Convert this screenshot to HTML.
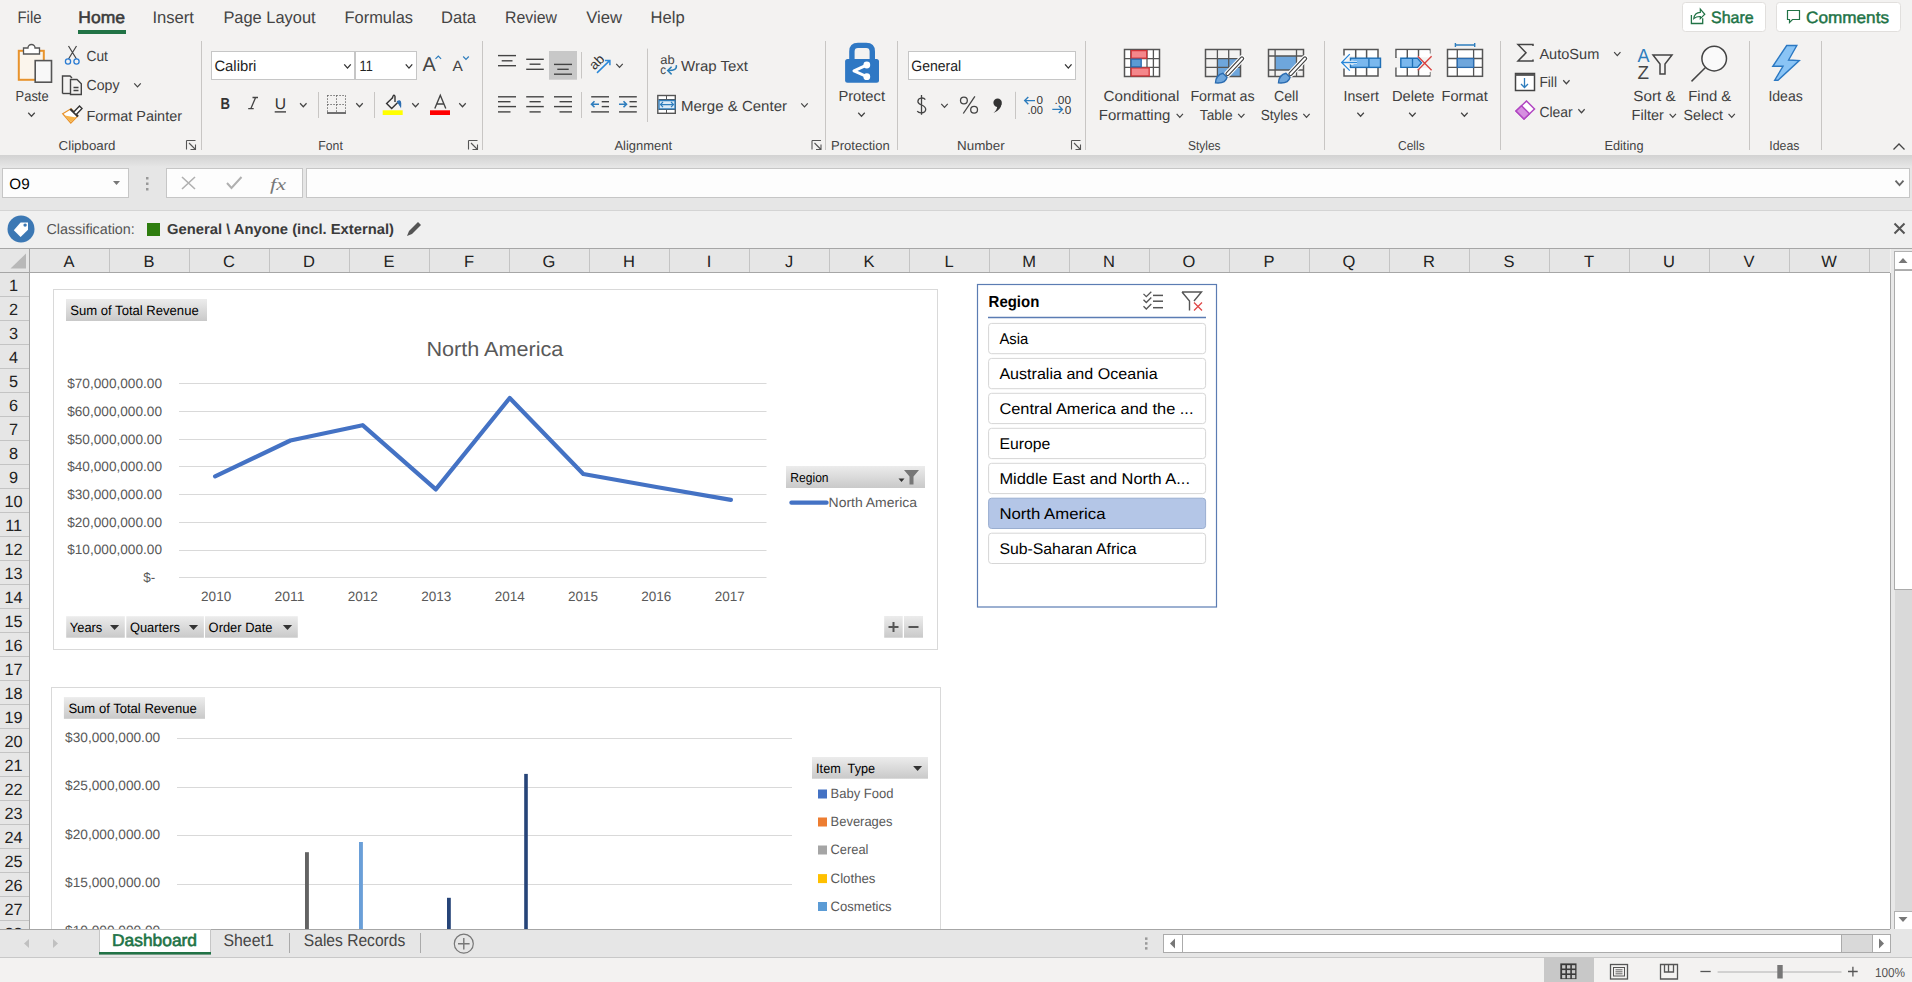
<!DOCTYPE html>
<html><head><meta charset="utf-8"><title>Excel - Dashboard</title>
<style>
html,body{margin:0;padding:0;width:1912px;height:982px;overflow:hidden;background:#f3f2f1;}
svg{position:absolute;left:0;top:0;display:block;}
text{white-space:pre;}
</style></head><body>
<svg width="1912" height="982" viewBox="0 0 1912 982" font-family="Liberation Sans, sans-serif" text-rendering="geometricPrecision">
<rect x="0" y="0" width="1912" height="155" fill="#f3f2f1" />
<defs><linearGradient id="shd" x1="0" y1="0" x2="0" y2="1"><stop offset="0" stop-color="#d2d2d2"/><stop offset="1" stop-color="#e6e6e6"/></linearGradient><linearGradient id="btn" x1="0" y1="0" x2="0" y2="1"><stop offset="0" stop-color="#ececec"/><stop offset="1" stop-color="#c9c9c9"/></linearGradient></defs>
<rect x="0" y="155" width="1912" height="55" fill="#e6e6e6" />
<rect x="0" y="155" width="1912" height="12" fill="url(#shd)" />
<rect x="0" y="210" width="1912" height="38" fill="#f0f0f0" />
<line x1="0" y1="210.5" x2="1912" y2="210.5" stroke="#d4d4d4" stroke-width="1" />
<text x="17.5" y="23" font-size="16.8" fill="#444" textLength="24.0" lengthAdjust="spacingAndGlyphs" font-family="Liberation Sans" >File</text>
<text x="78.3" y="23" font-size="16.8" fill="#3b3b3b" textLength="46.7" lengthAdjust="spacingAndGlyphs" font-family="Liberation Sans" stroke="#3b3b3b" stroke-width="0.55">Home</text>
<text x="152.4" y="23" font-size="16.8" fill="#444" textLength="41.6" lengthAdjust="spacingAndGlyphs" font-family="Liberation Sans" >Insert</text>
<text x="223.4" y="23" font-size="16.8" fill="#444" textLength="92.2" lengthAdjust="spacingAndGlyphs" font-family="Liberation Sans" >Page Layout</text>
<text x="344.5" y="23" font-size="16.8" fill="#444" textLength="68.5" lengthAdjust="spacingAndGlyphs" font-family="Liberation Sans" >Formulas</text>
<text x="441" y="23" font-size="16.8" fill="#444" textLength="35" lengthAdjust="spacingAndGlyphs" font-family="Liberation Sans" >Data</text>
<text x="505.1" y="23" font-size="16.8" fill="#444" textLength="51.9" lengthAdjust="spacingAndGlyphs" font-family="Liberation Sans" >Review</text>
<text x="586.2" y="23" font-size="16.8" fill="#444" textLength="35.8" lengthAdjust="spacingAndGlyphs" font-family="Liberation Sans" >View</text>
<text x="650.5" y="23" font-size="16.8" fill="#444" textLength="34.1" lengthAdjust="spacingAndGlyphs" font-family="Liberation Sans" >Help</text>
<rect x="78" y="30" width="48" height="4" fill="#217346" />
<rect x="1682.5" y="2.5" width="83" height="29" fill="#ffffff" stroke="#e1dfdd" stroke-width="1" rx="3" />
<rect x="1776.5" y="2.5" width="124" height="29" fill="#ffffff" stroke="#e1dfdd" stroke-width="1" rx="3" />
<text x="1711" y="23" font-size="16.5" fill="#217346" textLength="42.7" lengthAdjust="spacingAndGlyphs" font-family="Liberation Sans" stroke="#217346" stroke-width="0.45">Share</text>
<text x="1806" y="23" font-size="16.5" fill="#217346" textLength="83" lengthAdjust="spacingAndGlyphs" font-family="Liberation Sans" stroke="#217346" stroke-width="0.45">Comments</text>
<path d="M1691.4,15 V23.5 H1702.7 V18.3" fill="none" stroke="#217346" stroke-width="1.3" />
<path d="M1693.8,18.6 Q1694.5,12.5 1700.3,12.3 V9.1 L1704.8,14.3 L1700.3,18.6 V16.5 Q1696.5,16.3 1693.8,18.6 Z" fill="none" stroke="#217346" stroke-width="1.2" />
<path d="M1787.5,10.5 h12 v9 h-7 l-3,3 v-3 h-2 z" fill="none" stroke="#217346" stroke-width="1.2" />
<line x1="201.5" y1="41" x2="201.5" y2="150" stroke="#c8c6c4" stroke-width="1" />
<line x1="482.5" y1="41" x2="482.5" y2="150" stroke="#c8c6c4" stroke-width="1" />
<line x1="825.5" y1="41" x2="825.5" y2="150" stroke="#c8c6c4" stroke-width="1" />
<line x1="897.5" y1="41" x2="897.5" y2="150" stroke="#c8c6c4" stroke-width="1" />
<line x1="1085.5" y1="41" x2="1085.5" y2="150" stroke="#c8c6c4" stroke-width="1" />
<line x1="1324.5" y1="41" x2="1324.5" y2="150" stroke="#c8c6c4" stroke-width="1" />
<line x1="1500.5" y1="41" x2="1500.5" y2="150" stroke="#c8c6c4" stroke-width="1" />
<line x1="1749.5" y1="41" x2="1749.5" y2="150" stroke="#c8c6c4" stroke-width="1" />
<line x1="1821.5" y1="41" x2="1821.5" y2="150" stroke="#c8c6c4" stroke-width="1" />
<text x="58.6" y="149.7" font-size="13" fill="#444" textLength="56.9" lengthAdjust="spacingAndGlyphs" font-family="Liberation Sans" >Clipboard</text>
<text x="318.3" y="149.7" font-size="13" fill="#444" textLength="24.5" lengthAdjust="spacingAndGlyphs" font-family="Liberation Sans" >Font</text>
<text x="614.5" y="149.7" font-size="13" fill="#444" textLength="57.5" lengthAdjust="spacingAndGlyphs" font-family="Liberation Sans" >Alignment</text>
<text x="831" y="149.7" font-size="13" fill="#444" textLength="58.7" lengthAdjust="spacingAndGlyphs" font-family="Liberation Sans" >Protection</text>
<text x="957" y="149.7" font-size="13" fill="#444" textLength="47.7" lengthAdjust="spacingAndGlyphs" font-family="Liberation Sans" >Number</text>
<text x="1188" y="149.7" font-size="13" fill="#444" textLength="32.6" lengthAdjust="spacingAndGlyphs" font-family="Liberation Sans" >Styles</text>
<text x="1398" y="149.7" font-size="13" fill="#444" textLength="26.7" lengthAdjust="spacingAndGlyphs" font-family="Liberation Sans" >Cells</text>
<text x="1604.4" y="149.7" font-size="13" fill="#444" textLength="39.1" lengthAdjust="spacingAndGlyphs" font-family="Liberation Sans" >Editing</text>
<text x="1769.3" y="149.7" font-size="13" fill="#444" textLength="30.1" lengthAdjust="spacingAndGlyphs" font-family="Liberation Sans" >Ideas</text>
<path d="M186.5,140.5 h9 M186.5,140.5 v9 M189,143 l6.5,6.5 M195.5,144.5 v5 h-5" fill="none" stroke="#555" stroke-width="1.1" />
<path d="M468.5,140.5 h9 M468.5,140.5 v9 M471,143 l6.5,6.5 M477.5,144.5 v5 h-5" fill="none" stroke="#555" stroke-width="1.1" />
<path d="M812.0,140.5 h9 M812.0,140.5 v9 M814.5,143 l6.5,6.5 M821.0,144.5 v5 h-5" fill="none" stroke="#555" stroke-width="1.1" />
<path d="M1071.5,140.5 h9 M1071.5,140.5 v9 M1074,143 l6.5,6.5 M1080.5,144.5 v5 h-5" fill="none" stroke="#555" stroke-width="1.1" />
<path d="M1893.5,149.5 l5.5,-5.5 l5.5,5.5" fill="none" stroke="#444" stroke-width="1.3" />
<rect x="18.8" y="50.8" width="25" height="29" fill="#fbf5ec" stroke="#e8932c" stroke-width="2" />
<path d="M23.5,50 v-2 h4.5 a3,3 0 0 1 7,0 h4.5 v2 v4 h-16 z" fill="#fff" stroke="#555" stroke-width="1.3" />
<rect x="35.2" y="60.6" width="16.3" height="21.6" fill="#f8f8f8" stroke="#555" stroke-width="1.6" />
<text x="15.6" y="100.5" font-size="14.6" fill="#404040" textLength="33" lengthAdjust="spacingAndGlyphs" font-family="Liberation Sans" >Paste</text>
<path d="M28.25,112.75 L31.5,116.25 L34.75,112.75" fill="none" stroke="#444" stroke-width="1.2" />
<path d="M68.5,46 l8,13 M76.5,46 l-8,13" fill="none" stroke="#444" stroke-width="1.2" />
<circle cx="68" cy="61.5" r="2.6" fill="none" stroke="#2b7cd3" stroke-width="1.3"/>
<circle cx="76.5" cy="61.5" r="2.6" fill="none" stroke="#2b7cd3" stroke-width="1.3"/>
<text x="86.5" y="61" font-size="14.6" fill="#404040" textLength="21.4" lengthAdjust="spacingAndGlyphs" font-family="Liberation Sans" >Cut</text>
<path d="M62.5,93.5 v-17.5 h7.5 l2,2" fill="none" stroke="#444" stroke-width="1.4" />
<path d="M70.5,94.5 v-15 h6.5 l4.3,4.3 v10.7 z M73.5,87.5 h5 M73.5,90.5 h5" fill="none" stroke="#444" stroke-width="1.4" />
<path d="M62.5,93.5 h7.5" fill="none" stroke="#444" stroke-width="1.4" />
<text x="86.5" y="90.3" font-size="14.6" fill="#404040" textLength="33" lengthAdjust="spacingAndGlyphs" font-family="Liberation Sans" >Copy</text>
<path d="M134.25,83.45 L137.5,86.95 L140.75,83.45" fill="none" stroke="#444" stroke-width="1.2" />
<path d="M62.7,113.7 L71,108.8 L77.7,116 L70.8,123 Z" fill="#fff" stroke="#e8932c" stroke-width="1.3" />
<path d="M64.8,115.5 L76,117.5 L70.8,122 Z" fill="#f6b349" />
<line x1="70.3" y1="109" x2="78" y2="116.5" stroke="#333" stroke-width="2.2" />
<path d="M74,111.8 L79.5,106 L82,108.5 L76.5,114.3" fill="#fff" stroke="#333" stroke-width="1.4" />
<text x="86.5" y="120.6" font-size="14.6" fill="#404040" textLength="95.5" lengthAdjust="spacingAndGlyphs" font-family="Liberation Sans" >Format Painter</text>
<rect x="211.5" y="51.5" width="143" height="28" fill="#ffffff" stroke="#c6c6c6" stroke-width="1" />
<rect x="355.5" y="51.5" width="61" height="28" fill="#ffffff" stroke="#c6c6c6" stroke-width="1" />
<text x="214.4" y="71" font-size="15" fill="#222" textLength="42" lengthAdjust="spacingAndGlyphs" font-family="Liberation Sans" >Calibri</text>
<text x="359.6" y="71" font-size="15" fill="#222" textLength="13.2" lengthAdjust="spacingAndGlyphs" font-family="Liberation Sans" >11</text>
<path d="M344.25,64.3 L347.5,68.10000000000001 L350.75,64.3" fill="none" stroke="#333" stroke-width="1.3" />
<path d="M405.75,64.3 L409,68.10000000000001 L412.25,64.3" fill="none" stroke="#333" stroke-width="1.3" />
<text x="422.6" y="71" font-size="20" fill="#444" textLength="13.2" lengthAdjust="spacingAndGlyphs" font-family="Liberation Sans" >A</text>
<path d="M435.5,58.8 l2.8,-2.8 l2.8,2.8" fill="none" stroke="#2e7dbd" stroke-width="1.2" />
<text x="452.6" y="71" font-size="15" fill="#444" textLength="10.3" lengthAdjust="spacingAndGlyphs" font-family="Liberation Sans" >A</text>
<path d="M463.2,56.5 l2.8,2.8 l2.8,-2.8" fill="none" stroke="#2e7dbd" stroke-width="1.2" />
<text x="220.5" y="108.8" font-size="16" fill="#333" textLength="9.5" lengthAdjust="spacingAndGlyphs" font-weight="bold" font-family="Liberation Sans" >B</text>
<path d="M252.5,97.5 h5.5 M248.2,108.6 h5.5 M255.6,97.5 L250.9,108.6" fill="none" stroke="#444" stroke-width="1.3" />
<text x="274.7" y="108.8" font-size="15.5" fill="#333" textLength="11.3" lengthAdjust="spacingAndGlyphs" font-family="Liberation Sans" >U</text>
<line x1="274.7" y1="111.9" x2="286" y2="111.9" stroke="#333" stroke-width="1.3" />
<path d="M300.05,103.25 L303.3,106.75 L306.55,103.25" fill="none" stroke="#444" stroke-width="1.2" />
<line x1="318.5" y1="92" x2="318.5" y2="118" stroke="#c8c6c4" stroke-width="1" />
<line x1="374.5" y1="92" x2="374.5" y2="118" stroke="#c8c6c4" stroke-width="1" />
<path d="M327.5,95.5 h18 v17 M327.5,95.5 v17 M336.5,95.5 v17 M327.5,104.5 h18" fill="none" stroke="#444" stroke-width="1" stroke-dasharray="1.1 1.9"/>
<line x1="327" y1="113" x2="346" y2="113" stroke="#444" stroke-width="1.5" />
<path d="M356.25,103.25 L359.5,106.75 L362.75,103.25" fill="none" stroke="#444" stroke-width="1.2" />
<path d="M392.3,98 L386.6,103.4 L391.7,108.5 L397.7,102.5" fill="none" stroke="#333" stroke-width="1.4" />
<path d="M392.3,98.5 Q393.5,93 395,96.5 V102" fill="none" stroke="#333" stroke-width="1.4" />
<path d="M397.5,101.5 Q401.5,99 400.6,106.5 Q399,104 397.5,101.5 z" fill="#2b6cb0" stroke="#2b6cb0" stroke-width="1.2" />
<rect x="382.7" y="110.3" width="20" height="4.7" fill="#ffff00" />
<path d="M412.25,103.25 L415.5,106.75 L418.75,103.25" fill="none" stroke="#444" stroke-width="1.2" />
<path d="M434.8,108.4 L440.3,95.2 L445.8,108.4 M436.6,104 h7.4" fill="none" stroke="#444" stroke-width="1.4" />
<rect x="430" y="110.3" width="20" height="4.7" fill="#ff0000" />
<path d="M459.25,103.25 L462.5,106.75 L465.75,103.25" fill="none" stroke="#444" stroke-width="1.2" />
<line x1="498" y1="55.6" x2="516" y2="55.6" stroke="#444" stroke-width="1.4" />
<line x1="501.7" y1="60.8" x2="512.5" y2="60.8" stroke="#444" stroke-width="1.4" />
<line x1="498" y1="65.7" x2="516" y2="65.7" stroke="#444" stroke-width="1.4" />
<line x1="526.2" y1="59.3" x2="543.8000000000001" y2="59.3" stroke="#444" stroke-width="1.4" />
<line x1="529.6" y1="64.2" x2="540.5" y2="64.2" stroke="#444" stroke-width="1.4" />
<line x1="526.2" y1="69.3" x2="543.8000000000001" y2="69.3" stroke="#444" stroke-width="1.4" />
<rect x="549" y="51" width="28" height="28.7" fill="#c8c8c8" />
<line x1="554" y1="64.4" x2="572" y2="64.4" stroke="#444" stroke-width="1.4" />
<line x1="557.3" y1="69.3" x2="568.7" y2="69.3" stroke="#444" stroke-width="1.4" />
<line x1="554" y1="74.2" x2="572" y2="74.2" stroke="#444" stroke-width="1.4" />
<line x1="581.5" y1="52" x2="581.5" y2="78.5" stroke="#c8c6c4" stroke-width="1" />
<text x="596.8" y="66.6" font-size="13.5" fill="#333" text-anchor="middle" font-family="Liberation Sans" transform="rotate(-45 596.8 62.2)">ab</text>
<path d="M597,72.9 L609.6,60.6 M605,60.6 h4.9 v4.7" fill="none" stroke="#2b88d8" stroke-width="1.5" />
<path d="M616.25,63.849999999999994 L619.5,67.35 L622.75,63.849999999999994" fill="none" stroke="#444" stroke-width="1.2" />
<line x1="647.5" y1="48.6" x2="647.5" y2="122" stroke="#c8c6c4" stroke-width="1" />
<text x="660.2" y="64.4" font-size="12.5" fill="#444" textLength="14.4" lengthAdjust="spacingAndGlyphs" font-family="Liberation Sans" >ab</text>
<text x="660.2" y="73.6" font-size="12.5" fill="#444" textLength="5.8" lengthAdjust="spacingAndGlyphs" font-family="Liberation Sans" >c</text>
<path d="M676.3,65.2 Q677.5,70.8 668,70.6" fill="none" stroke="#2b7fb8" stroke-width="1.5" />
<path d="M671.6,66.8 L667.7,70.6 L671.6,74.4" fill="none" stroke="#2b7fb8" stroke-width="1.5" />
<text x="681" y="71" font-size="14.6" fill="#404040" textLength="67" lengthAdjust="spacingAndGlyphs" font-family="Liberation Sans" >Wrap Text</text>
<line x1="498" y1="96.8" x2="516" y2="96.8" stroke="#444" stroke-width="1.4" />
<line x1="498" y1="101.7" x2="510.5" y2="101.7" stroke="#444" stroke-width="1.4" />
<line x1="498" y1="106.6" x2="516" y2="106.6" stroke="#444" stroke-width="1.4" />
<line x1="498" y1="111.9" x2="510.5" y2="111.9" stroke="#444" stroke-width="1.4" />
<line x1="526.2" y1="96.8" x2="543.8000000000001" y2="96.8" stroke="#444" stroke-width="1.4" />
<line x1="529.5" y1="101.7" x2="540.7" y2="101.7" stroke="#444" stroke-width="1.4" />
<line x1="526.2" y1="106.6" x2="543.8000000000001" y2="106.6" stroke="#444" stroke-width="1.4" />
<line x1="529.5" y1="111.9" x2="540.7" y2="111.9" stroke="#444" stroke-width="1.4" />
<line x1="554" y1="96.8" x2="572" y2="96.8" stroke="#444" stroke-width="1.4" />
<line x1="559.5" y1="101.7" x2="572" y2="101.7" stroke="#444" stroke-width="1.4" />
<line x1="554" y1="106.6" x2="572" y2="106.6" stroke="#444" stroke-width="1.4" />
<line x1="559.5" y1="111.9" x2="572" y2="111.9" stroke="#444" stroke-width="1.4" />
<line x1="581.5" y1="92" x2="581.5" y2="118" stroke="#c8c6c4" stroke-width="1" />
<line x1="591.2" y1="96.8" x2="609.0" y2="96.8" stroke="#444" stroke-width="1.4" />
<line x1="601.7" y1="101.7" x2="609.0" y2="101.7" stroke="#444" stroke-width="1.4" />
<line x1="601.7" y1="106.6" x2="609.0" y2="106.6" stroke="#444" stroke-width="1.4" />
<line x1="591.2" y1="111.9" x2="609.0" y2="111.9" stroke="#444" stroke-width="1.4" />
<path d="M591.5,104.2 h7.5 M594.5,101.2 l-3,3 l3,3" fill="none" stroke="#2e7dbd" stroke-width="1.6" />
<line x1="619" y1="96.8" x2="636.8" y2="96.8" stroke="#444" stroke-width="1.4" />
<line x1="629.5" y1="101.7" x2="636.8" y2="101.7" stroke="#444" stroke-width="1.4" />
<line x1="629.5" y1="106.6" x2="636.8" y2="106.6" stroke="#444" stroke-width="1.4" />
<line x1="619" y1="111.9" x2="636.8" y2="111.9" stroke="#444" stroke-width="1.4" />
<path d="M619,104.2 h7.5 M623.5,101.2 l3,3 l-3,3" fill="none" stroke="#2e7dbd" stroke-width="1.6" />
<rect x="657.8" y="95.5" width="17.5" height="17.8" fill="#fff" stroke="#555" stroke-width="1.4" />
<path d="M658.5,99.5 h16.5 M658.5,109.5 h16.5 M666.5,95.5 v4 M666.5,109.5 v4" fill="none" stroke="#555" stroke-width="1" />
<path d="M659,100.5 h16 v8.3 h-16 z" fill="#ddebf7" stroke="#2e7dbd" stroke-width="1.3" />
<path d="M660.5,104.6 h13 M663,102 l-2.5,2.6 l2.5,2.6 M671,102 l2.5,2.6 l-2.5,2.6" fill="none" stroke="#2e7dbd" stroke-width="1.2" />
<text x="681" y="111" font-size="14.6" fill="#404040" textLength="106" lengthAdjust="spacingAndGlyphs" font-family="Liberation Sans" >Merge &amp; Center</text>
<path d="M801.25,103.45 L804.5,106.95 L807.75,103.45" fill="none" stroke="#444" stroke-width="1.2" />
<path d="M851.9,60 V51.5 Q851.9,45.4 858,45.4 H866.2 Q872.3,45.4 872.3,51.5 V60" fill="none" stroke="#2f78c4" stroke-width="5.4" />
<rect x="845.1" y="58.9" width="33.9" height="23.9" fill="#2f78c4" rx="2.5" />
<path d="M866.5,65.2 L854,70.8 L866.5,76.5" fill="none" stroke="#fff" stroke-width="3" stroke-linecap="round" stroke-linejoin="round"/>
<circle cx="866.8" cy="65" r="3.4" fill="#fff"/><circle cx="866.8" cy="76.7" r="3.4" fill="#fff"/>
<text x="838.4" y="101" font-size="14.6" fill="#404040" textLength="46.6" lengthAdjust="spacingAndGlyphs" font-family="Liberation Sans" >Protect</text>
<path d="M858.25,112.75 L861.5,116.25 L864.75,112.75" fill="none" stroke="#444" stroke-width="1.2" />
<rect x="908.5" y="51.5" width="167" height="28" fill="#ffffff" stroke="#c6c6c6" stroke-width="1" />
<text x="911.3" y="71" font-size="15" fill="#222" textLength="49.9" lengthAdjust="spacingAndGlyphs" font-family="Liberation Sans" >General</text>
<path d="M1065.05,64.3 L1068.3,68.10000000000001 L1071.55,64.3" fill="none" stroke="#333" stroke-width="1.3" />
<path d="M925.3,99.6 C923.8,97.3 917.9,97.2 917.9,101.4 C917.9,105.6 925.7,104.4 925.7,109.3 C925.7,113.6 919.2,113.6 917.2,111.2" fill="none" stroke="#444" stroke-width="1.3" />
<line x1="921.5" y1="95" x2="921.5" y2="114.8" stroke="#444" stroke-width="1.3" />
<path d="M941.25,103.85 L944.5,107.35 L947.75,103.85" fill="none" stroke="#444" stroke-width="1.2" />
<circle cx="963.9" cy="100.5" r="3.4" fill="none" stroke="#444" stroke-width="1.3"/><circle cx="974.1" cy="109.8" r="3.4" fill="none" stroke="#444" stroke-width="1.3"/>
<line x1="974.9" y1="96.3" x2="963.3" y2="113.5" stroke="#444" stroke-width="1.3" />
<circle cx="997.6" cy="102.7" r="4.2" fill="#333"/>
<path d="M993.5,113 Q1000.5,110.5 1001.8,103.5 L997.2,105.5 Q997.5,109.5 993.5,113 z" fill="#333" />
<line x1="1015.5" y1="91.8" x2="1015.5" y2="119" stroke="#c8c6c4" stroke-width="1" />
<text x="1036.5" y="103.5" font-size="11.5" fill="#333" textLength="6.5" lengthAdjust="spacingAndGlyphs" font-family="Liberation Sans" >0</text>
<text x="1027.5" y="113.7" font-size="11.5" fill="#333" textLength="15.5" lengthAdjust="spacingAndGlyphs" font-family="Liberation Sans" >.00</text>
<path d="M1024.5,100.6 h10.5 M1028.3,97 l-3.6,3.6 l3.6,3.6" fill="none" stroke="#2e7dbd" stroke-width="1.4" />
<text x="1054.5" y="103.5" font-size="11.5" fill="#333" textLength="16.5" lengthAdjust="spacingAndGlyphs" font-family="Liberation Sans" >.00</text>
<text x="1061.5" y="113.7" font-size="11.5" fill="#333" textLength="9.8" lengthAdjust="spacingAndGlyphs" font-family="Liberation Sans" >.0</text>
<path d="M1052.3,109.4 h10.5 M1058.8,105.8 l3.6,3.6 l-3.6,3.6" fill="none" stroke="#2e7dbd" stroke-width="1.4" />
<rect x="1124.5" y="49.5" width="35" height="27" fill="#fff" stroke="#555" stroke-width="1.5" />
<line x1="1130.8" y1="49.5" x2="1130.8" y2="76.5" stroke="#555" stroke-width="1.3" />
<line x1="1147" y1="49.5" x2="1147" y2="76.5" stroke="#555" stroke-width="1.3" />
<line x1="1153.4" y1="49.5" x2="1153.4" y2="76.5" stroke="#555" stroke-width="1.3" />
<line x1="1124.5" y1="58.6" x2="1159.5" y2="58.6" stroke="#555" stroke-width="1.3" />
<line x1="1124.5" y1="67.4" x2="1159.5" y2="67.4" stroke="#555" stroke-width="1.3" />
<rect x="1131.2" y="50.6" width="15.5" height="7.6" fill="#f4878b" stroke="#d13438" stroke-width="1.3" />
<rect x="1131.2" y="67.9" width="18" height="8" fill="#f4878b" stroke="#d13438" stroke-width="1.3" />
<rect x="1131.2" y="59.2" width="10" height="7.6" fill="#5b9bd5" stroke="#2b6cb0" stroke-width="1.3" />
<text x="1103.6" y="100.6" font-size="14.6" fill="#404040" textLength="75.8" lengthAdjust="spacingAndGlyphs" font-family="Liberation Sans" >Conditional</text>
<text x="1098.8" y="120.3" font-size="14.6" fill="#404040" textLength="71.5" lengthAdjust="spacingAndGlyphs" font-family="Liberation Sans" >Formatting</text>
<path d="M1176.6499999999999,113.85 L1179.8,117.35 L1182.95,113.85" fill="none" stroke="#444" stroke-width="1.2" />
<rect x="1217.4" y="58.6" width="23" height="17.8" fill="#6ea6dc" />
<rect x="1205.5" y="49.5" width="35" height="27" fill="none" stroke="#555" stroke-width="1.5" />
<line x1="1217.4" y1="49.5" x2="1217.4" y2="76.5" stroke="#555" stroke-width="1.3" />
<line x1="1228.7" y1="49.5" x2="1228.7" y2="76.5" stroke="#555" stroke-width="1.3" />
<line x1="1205.5" y1="58.6" x2="1240.5" y2="58.6" stroke="#555" stroke-width="1.3" />
<line x1="1205.5" y1="67.4" x2="1240.5" y2="67.4" stroke="#555" stroke-width="1.3" />
<path d="M1242.0,58.5 l-14.5,15.5" fill="none" stroke="#fff" stroke-width="6.5" stroke-linecap="round"/>
<path d="M1242.0,58.5 l-14.5,15.5" fill="none" stroke="#444" stroke-width="4.4" stroke-linecap="round"/>
<path d="M1242.0,58.5 l-14.5,15.5" fill="none" stroke="#fff" stroke-width="2" stroke-linecap="round"/>
<path d="M1215.5,82.8 q0.5,-8 7.5,-9.5 l4,4 q-1.5,6.5 -11.5,5.5 z" fill="#6ea6dc" stroke="#2b6cb0" stroke-width="1.4" />
<text x="1190.4" y="100.6" font-size="14.6" fill="#404040" textLength="64.3" lengthAdjust="spacingAndGlyphs" font-family="Liberation Sans" >Format as</text>
<text x="1199.8" y="120.3" font-size="14.6" fill="#404040" textLength="32.7" lengthAdjust="spacingAndGlyphs" font-family="Liberation Sans" >Table</text>
<path d="M1238.1499999999999,113.85 L1241.3,117.35 L1244.45,113.85" fill="none" stroke="#444" stroke-width="1.2" />
<rect x="1275.1" y="56" width="21.4" height="14" fill="#6ea6dc" />
<rect x="1268.5" y="49.5" width="35" height="27" fill="none" stroke="#555" stroke-width="1.5" />
<line x1="1275.1" y1="49.5" x2="1275.1" y2="76.5" stroke="#555" stroke-width="1.3" />
<line x1="1296.5" y1="49.5" x2="1296.5" y2="76.5" stroke="#555" stroke-width="1.3" />
<line x1="1268.5" y1="56" x2="1303.5" y2="56" stroke="#555" stroke-width="1.3" />
<line x1="1268.5" y1="70" x2="1303.5" y2="70" stroke="#555" stroke-width="1.3" />
<path d="M1305.0,58.5 l-14.5,15.5" fill="none" stroke="#fff" stroke-width="6.5" stroke-linecap="round"/>
<path d="M1305.0,58.5 l-14.5,15.5" fill="none" stroke="#444" stroke-width="4.4" stroke-linecap="round"/>
<path d="M1305.0,58.5 l-14.5,15.5" fill="none" stroke="#fff" stroke-width="2" stroke-linecap="round"/>
<path d="M1278.5,82.8 q0.5,-8 7.5,-9.5 l4,4 q-1.5,6.5 -11.5,5.5 z" fill="#6ea6dc" stroke="#2b6cb0" stroke-width="1.4" />
<text x="1273.9" y="100.6" font-size="14.6" fill="#404040" textLength="24.5" lengthAdjust="spacingAndGlyphs" font-family="Liberation Sans" >Cell</text>
<text x="1260.7" y="120.3" font-size="14.6" fill="#404040" textLength="37" lengthAdjust="spacingAndGlyphs" font-family="Liberation Sans" >Styles</text>
<path d="M1303.35,113.85 L1306.5,117.35 L1309.65,113.85" fill="none" stroke="#444" stroke-width="1.2" />
<path d="M1344,55.5 V49.5 H1378 V58 M1378,67.5 V76 H1344 V68.5 M1355.7,49.5 V58 M1366.6,49.5 V58 M1355.7,67.5 V76 M1366.6,67.5 V76" fill="#fff" stroke="#555" stroke-width="1.5" />
<rect x="1350.5" y="58.2" width="30" height="9.2" fill="#7ab8ee" stroke="#1f6fb5" stroke-width="1.4" />
<line x1="1368.9" y1="58.2" x2="1368.9" y2="67.4" stroke="#1f6fb5" stroke-width="1.3" />
<path d="M1352,60.5 V65" fill="none" stroke="#cfe6fa" stroke-width="3" />
<path d="M1349.8,54.1 L1341.6,62.5 L1349.8,70.6 M1341.6,62.5 H1357" fill="none" stroke="#fff" stroke-width="3" />
<path d="M1349.8,54.1 L1341.6,62.5 L1349.8,70.6 M1341.6,62.5 H1357" fill="none" stroke="#2b88d8" stroke-width="1.3" />
<text x="1343.6" y="100.9" font-size="14.6" fill="#404040" textLength="35.2" lengthAdjust="spacingAndGlyphs" font-family="Liberation Sans" >Insert</text>
<path d="M1357.35,112.75 L1360.6,116.25 L1363.85,112.75" fill="none" stroke="#444" stroke-width="1.2" />
<path d="M1396,58 V49.5 H1429.8 V53.5 M1429.8,72 V76 H1396 V67.5 M1407.3,49.5 V58 M1418.5,49.5 V56 M1407.3,67.5 V76 M1418.5,69 V76" fill="none" stroke="#555" stroke-width="1.5" />
<rect x="1396.8" y="50.3" width="33" height="7" fill="#fff" />
<rect x="1396.8" y="68.2" width="33" height="7" fill="#fff" />
<path d="M1407.3,49.5 V58 M1418.5,49.5 V56 M1407.3,67.5 V76 M1418.5,69 V76" fill="none" stroke="#555" stroke-width="1.4" />
<path d="M1400.8,58.2 H1417.5 L1421.5,62.8 L1417.5,67.4 H1400.8 Z" fill="#7ab8ee" stroke="#1f6fb5" stroke-width="1.4" />
<line x1="1412.5" y1="58.2" x2="1412.5" y2="67.4" stroke="#1f6fb5" stroke-width="1.3" />
<path d="M1417.8,56.2 L1431.6,70.3 M1431.6,56.2 L1417.8,70.3" fill="none" stroke="#d9413f" stroke-width="1.3" />
<text x="1392" y="100.9" font-size="14.6" fill="#404040" textLength="42.5" lengthAdjust="spacingAndGlyphs" font-family="Liberation Sans" >Delete</text>
<path d="M1409.15,112.75 L1412.4,116.25 L1415.65,112.75" fill="none" stroke="#444" stroke-width="1.2" />
<rect x="1447.5" y="49.5" width="35" height="26.8" fill="#fff" stroke="#555" stroke-width="1.5" />
<line x1="1457.3" y1="49.5" x2="1457.3" y2="76.3" stroke="#555" stroke-width="1.3" />
<line x1="1473.6" y1="49.5" x2="1473.6" y2="76.3" stroke="#555" stroke-width="1.3" />
<line x1="1447.5" y1="58.5" x2="1482.5" y2="58.5" stroke="#555" stroke-width="1.3" />
<line x1="1447.5" y1="67.4" x2="1482.5" y2="67.4" stroke="#555" stroke-width="1.3" />
<rect x="1457.3" y="58.5" width="16.3" height="8.9" fill="#6ea6dc" stroke="#2b6cb0" stroke-width="1.3" />
<path d="M1455.4,45 h19.3 M1455.4,43 v4 M1474.7,43 v4" fill="none" stroke="#2e7dbd" stroke-width="1.4" />
<text x="1441.5" y="100.9" font-size="14.6" fill="#404040" textLength="46.2" lengthAdjust="spacingAndGlyphs" font-family="Liberation Sans" >Format</text>
<path d="M1461.15,112.75 L1464.4,116.25 L1467.65,112.75" fill="none" stroke="#444" stroke-width="1.2" />
<path d="M1533,46 v-1.5 h-15 l8,8.3 l-8,8.3 h15 v-1.5" fill="none" stroke="#444" stroke-width="1.5" />
<text x="1539.4" y="58.8" font-size="14.6" fill="#404040" textLength="59.9" lengthAdjust="spacingAndGlyphs" font-family="Liberation Sans" >AutoSum</text>
<path d="M1614.1499999999999,52.05 L1617.3,55.55 L1620.45,52.05" fill="none" stroke="#444" stroke-width="1.2" />
<rect x="1515.5" y="73.5" width="19" height="17" fill="#fff" stroke="#444" stroke-width="1.5" />
<line x1="1515.5" y1="74.8" x2="1534.5" y2="74.8" stroke="#555" stroke-width="2.2" />
<path d="M1524.5,78 v9 M1521,84 l3.5,3.5 l3.5,-3.5" fill="none" stroke="#2e7dbd" stroke-width="1.3" />
<text x="1539.4" y="87.4" font-size="14.6" fill="#404040" textLength="17.6" lengthAdjust="spacingAndGlyphs" font-family="Liberation Sans" >Fill</text>
<path d="M1563.25,80.25 L1566.4,83.75 L1569.5500000000002,80.25" fill="none" stroke="#444" stroke-width="1.2" />
<path d="M1516,111 l10.5,-10 l8,8 l-10.5,10 z" fill="#fff" stroke="#b146c2" stroke-width="1.5" />
<path d="M1516,111 l5.5,-5.2 l8,8 l-5.5,5.2 z" fill="#d68fe0" stroke="#b146c2" stroke-width="1.5" />
<text x="1539.4" y="116.6" font-size="14.6" fill="#404040" textLength="33.3" lengthAdjust="spacingAndGlyphs" font-family="Liberation Sans" >Clear</text>
<path d="M1578.35,109.25 L1581.5,112.75 L1584.65,109.25" fill="none" stroke="#444" stroke-width="1.2" />
<text x="1637.6" y="61.5" font-size="19" fill="#2e7dbd" textLength="12" lengthAdjust="spacingAndGlyphs" font-family="Liberation Sans" >A</text>
<text x="1637.6" y="79" font-size="19" fill="#444" textLength="11.5" lengthAdjust="spacingAndGlyphs" font-family="Liberation Sans" >Z</text>
<path d="M1653,55 h19 l-7,9 v10 h-5 v-10 z" fill="none" stroke="#444" stroke-width="1.5" />
<text x="1633.3" y="100.7" font-size="14.6" fill="#404040" textLength="42.4" lengthAdjust="spacingAndGlyphs" font-family="Liberation Sans" >Sort &amp;</text>
<text x="1631.6" y="120.4" font-size="14.6" fill="#404040" textLength="32.3" lengthAdjust="spacingAndGlyphs" font-family="Liberation Sans" >Filter</text>
<path d="M1669.6499999999999,113.85 L1672.8,117.35 L1675.95,113.85" fill="none" stroke="#444" stroke-width="1.2" />
<circle cx="1714.2" cy="58.6" r="12.3" fill="#fafafa" stroke="#444" stroke-width="1.5"/>
<line x1="1705.5" y1="67.5" x2="1691.5" y2="81.4" stroke="#444" stroke-width="1.5" />
<text x="1688.3" y="100.7" font-size="14.6" fill="#404040" textLength="42.9" lengthAdjust="spacingAndGlyphs" font-family="Liberation Sans" >Find &amp;</text>
<text x="1683.6" y="120.4" font-size="14.6" fill="#404040" textLength="39.4" lengthAdjust="spacingAndGlyphs" font-family="Liberation Sans" >Select</text>
<path d="M1728.55,113.85 L1731.7,117.35 L1734.8500000000001,113.85" fill="none" stroke="#444" stroke-width="1.2" />
<path d="M1786.7,45.5 h10.1 l-8.2,14.5 l10.7,0.6 l-21.3,19.6 h-3.3 l8.3,-13.9 h-10.2 z" fill="#8ac4f5" stroke="#2b78c2" stroke-width="1.4" />
<text x="1768.4" y="100.7" font-size="14.6" fill="#404040" textLength="34.4" lengthAdjust="spacingAndGlyphs" font-family="Liberation Sans" >Ideas</text>
<rect x="2.5" y="168.5" width="126" height="29" fill="#fdfdfd" stroke="#c6c6c6" stroke-width="1" />
<text x="9.3" y="189" font-size="15" fill="#000" textLength="20.3" lengthAdjust="spacingAndGlyphs" font-family="Liberation Sans" >O9</text>
<path d="M113,181 h7 l-3.5,4 z" fill="#777" />
<rect x="146" y="177" width="2.5" height="2.5" fill="#999" />
<rect x="146" y="182.5" width="2.5" height="2.5" fill="#999" />
<rect x="146" y="188" width="2.5" height="2.5" fill="#999" />
<rect x="166.5" y="168.5" width="136" height="29" fill="#fdfdfd" stroke="#c6c6c6" stroke-width="1" />
<path d="M182,177 l13,12 M195,177 l-13,12" fill="none" stroke="#b0b0b0" stroke-width="1.6" />
<path d="M227,183 l4.5,5 l10,-11" fill="none" stroke="#b0b0b0" stroke-width="2" />
<text x="270" y="190" font-size="17" fill="#777" textLength="16" lengthAdjust="spacingAndGlyphs" font-family="Liberation Serif" font-style="italic">fx</text>
<rect x="306.5" y="168.5" width="1603" height="29" fill="#fdfdfd" stroke="#c6c6c6" stroke-width="1" />
<path d="M1895.5,180.55 L1899.5,185.05 L1903.5,180.55" fill="none" stroke="#666" stroke-width="1.8" />
<circle cx="21" cy="229" r="13.5" fill="#3c78b4"/>
<path d="M13.8,230.2 L20.6,237.1 L28,229.7 V222.4 H20.6 Z" fill="#fff" />
<circle cx="25.1" cy="225.1" r="1.7" fill="#3c78b4"/>
<text x="46.4" y="233.6" font-size="14.5" fill="#555" textLength="88.4" lengthAdjust="spacingAndGlyphs" font-family="Liberation Sans" >Classification:</text>
<rect x="147" y="223" width="13" height="13" fill="#2e7d0f" />
<text x="167" y="233.6" font-size="14.5" fill="#3a3a3a" textLength="227" lengthAdjust="spacingAndGlyphs" font-weight="bold" font-family="Liberation Sans" >General \ Anyone (incl. External)</text>
<path d="M407,236 l2,-5 l9,-9 l3,3 l-9,9 z" fill="#555" />
<path d="M1894.5,223.5 l10,10 M1904.5,223.5 l-10,10" fill="none" stroke="#555" stroke-width="2" />
<rect x="0" y="249" width="1890" height="23" fill="#e6e6e6" />
<line x1="0" y1="248.5" x2="1912" y2="248.5" stroke="#a6a6a6" stroke-width="1" />
<line x1="0" y1="272.5" x2="1890" y2="272.5" stroke="#a6a6a6" stroke-width="1" />
<path d="M10.5,268.5 L26,253.5 L26,268.5 z" fill="#b8b8b8" />
<line x1="29.5" y1="249" x2="29.5" y2="272" stroke="#c4c4c4" stroke-width="1" />
<text x="69" y="267.3" font-size="16.5" fill="#222" text-anchor="middle" font-family="Liberation Sans" >A</text>
<line x1="109.5" y1="249" x2="109.5" y2="272" stroke="#c4c4c4" stroke-width="1" />
<text x="149" y="267.3" font-size="16.5" fill="#222" text-anchor="middle" font-family="Liberation Sans" >B</text>
<line x1="189.5" y1="249" x2="189.5" y2="272" stroke="#c4c4c4" stroke-width="1" />
<text x="229" y="267.3" font-size="16.5" fill="#222" text-anchor="middle" font-family="Liberation Sans" >C</text>
<line x1="269.5" y1="249" x2="269.5" y2="272" stroke="#c4c4c4" stroke-width="1" />
<text x="309" y="267.3" font-size="16.5" fill="#222" text-anchor="middle" font-family="Liberation Sans" >D</text>
<line x1="349.5" y1="249" x2="349.5" y2="272" stroke="#c4c4c4" stroke-width="1" />
<text x="389" y="267.3" font-size="16.5" fill="#222" text-anchor="middle" font-family="Liberation Sans" >E</text>
<line x1="429.5" y1="249" x2="429.5" y2="272" stroke="#c4c4c4" stroke-width="1" />
<text x="469" y="267.3" font-size="16.5" fill="#222" text-anchor="middle" font-family="Liberation Sans" >F</text>
<line x1="509.5" y1="249" x2="509.5" y2="272" stroke="#c4c4c4" stroke-width="1" />
<text x="549" y="267.3" font-size="16.5" fill="#222" text-anchor="middle" font-family="Liberation Sans" >G</text>
<line x1="589.5" y1="249" x2="589.5" y2="272" stroke="#c4c4c4" stroke-width="1" />
<text x="629" y="267.3" font-size="16.5" fill="#222" text-anchor="middle" font-family="Liberation Sans" >H</text>
<line x1="669.5" y1="249" x2="669.5" y2="272" stroke="#c4c4c4" stroke-width="1" />
<text x="709" y="267.3" font-size="16.5" fill="#222" text-anchor="middle" font-family="Liberation Sans" >I</text>
<line x1="749.5" y1="249" x2="749.5" y2="272" stroke="#c4c4c4" stroke-width="1" />
<text x="789" y="267.3" font-size="16.5" fill="#222" text-anchor="middle" font-family="Liberation Sans" >J</text>
<line x1="829.5" y1="249" x2="829.5" y2="272" stroke="#c4c4c4" stroke-width="1" />
<text x="869" y="267.3" font-size="16.5" fill="#222" text-anchor="middle" font-family="Liberation Sans" >K</text>
<line x1="909.5" y1="249" x2="909.5" y2="272" stroke="#c4c4c4" stroke-width="1" />
<text x="949" y="267.3" font-size="16.5" fill="#222" text-anchor="middle" font-family="Liberation Sans" >L</text>
<line x1="989.5" y1="249" x2="989.5" y2="272" stroke="#c4c4c4" stroke-width="1" />
<text x="1029" y="267.3" font-size="16.5" fill="#222" text-anchor="middle" font-family="Liberation Sans" >M</text>
<line x1="1069.5" y1="249" x2="1069.5" y2="272" stroke="#c4c4c4" stroke-width="1" />
<text x="1109" y="267.3" font-size="16.5" fill="#222" text-anchor="middle" font-family="Liberation Sans" >N</text>
<line x1="1149.5" y1="249" x2="1149.5" y2="272" stroke="#c4c4c4" stroke-width="1" />
<text x="1189" y="267.3" font-size="16.5" fill="#222" text-anchor="middle" font-family="Liberation Sans" >O</text>
<line x1="1229.5" y1="249" x2="1229.5" y2="272" stroke="#c4c4c4" stroke-width="1" />
<text x="1269" y="267.3" font-size="16.5" fill="#222" text-anchor="middle" font-family="Liberation Sans" >P</text>
<line x1="1309.5" y1="249" x2="1309.5" y2="272" stroke="#c4c4c4" stroke-width="1" />
<text x="1349" y="267.3" font-size="16.5" fill="#222" text-anchor="middle" font-family="Liberation Sans" >Q</text>
<line x1="1389.5" y1="249" x2="1389.5" y2="272" stroke="#c4c4c4" stroke-width="1" />
<text x="1429" y="267.3" font-size="16.5" fill="#222" text-anchor="middle" font-family="Liberation Sans" >R</text>
<line x1="1469.5" y1="249" x2="1469.5" y2="272" stroke="#c4c4c4" stroke-width="1" />
<text x="1509" y="267.3" font-size="16.5" fill="#222" text-anchor="middle" font-family="Liberation Sans" >S</text>
<line x1="1549.5" y1="249" x2="1549.5" y2="272" stroke="#c4c4c4" stroke-width="1" />
<text x="1589" y="267.3" font-size="16.5" fill="#222" text-anchor="middle" font-family="Liberation Sans" >T</text>
<line x1="1629.5" y1="249" x2="1629.5" y2="272" stroke="#c4c4c4" stroke-width="1" />
<text x="1669" y="267.3" font-size="16.5" fill="#222" text-anchor="middle" font-family="Liberation Sans" >U</text>
<line x1="1709.5" y1="249" x2="1709.5" y2="272" stroke="#c4c4c4" stroke-width="1" />
<text x="1749" y="267.3" font-size="16.5" fill="#222" text-anchor="middle" font-family="Liberation Sans" >V</text>
<line x1="1789.5" y1="249" x2="1789.5" y2="272" stroke="#c4c4c4" stroke-width="1" />
<text x="1829" y="267.3" font-size="16.5" fill="#222" text-anchor="middle" font-family="Liberation Sans" >W</text>
<line x1="1869.5" y1="249" x2="1869.5" y2="272" stroke="#c4c4c4" stroke-width="1" />
<rect x="0" y="273" width="29" height="656" fill="#e6e6e6" />
<line x1="29.5" y1="249" x2="29.5" y2="929" stroke="#a6a6a6" stroke-width="1" />
<line x1="0" y1="296.5" x2="29" y2="296.5" stroke="#c4c4c4" stroke-width="1" />
<text x="13.6" y="290.8" font-size="16.3" fill="#222" text-anchor="middle" font-family="Liberation Sans" >1</text>
<line x1="0" y1="320.5" x2="29" y2="320.5" stroke="#c4c4c4" stroke-width="1" />
<text x="13.6" y="314.8" font-size="16.3" fill="#222" text-anchor="middle" font-family="Liberation Sans" >2</text>
<line x1="0" y1="344.5" x2="29" y2="344.5" stroke="#c4c4c4" stroke-width="1" />
<text x="13.6" y="338.8" font-size="16.3" fill="#222" text-anchor="middle" font-family="Liberation Sans" >3</text>
<line x1="0" y1="368.5" x2="29" y2="368.5" stroke="#c4c4c4" stroke-width="1" />
<text x="13.6" y="362.8" font-size="16.3" fill="#222" text-anchor="middle" font-family="Liberation Sans" >4</text>
<line x1="0" y1="392.5" x2="29" y2="392.5" stroke="#c4c4c4" stroke-width="1" />
<text x="13.6" y="386.8" font-size="16.3" fill="#222" text-anchor="middle" font-family="Liberation Sans" >5</text>
<line x1="0" y1="416.5" x2="29" y2="416.5" stroke="#c4c4c4" stroke-width="1" />
<text x="13.6" y="410.8" font-size="16.3" fill="#222" text-anchor="middle" font-family="Liberation Sans" >6</text>
<line x1="0" y1="440.5" x2="29" y2="440.5" stroke="#c4c4c4" stroke-width="1" />
<text x="13.6" y="434.8" font-size="16.3" fill="#222" text-anchor="middle" font-family="Liberation Sans" >7</text>
<line x1="0" y1="464.5" x2="29" y2="464.5" stroke="#c4c4c4" stroke-width="1" />
<text x="13.6" y="458.8" font-size="16.3" fill="#222" text-anchor="middle" font-family="Liberation Sans" >8</text>
<line x1="0" y1="488.5" x2="29" y2="488.5" stroke="#c4c4c4" stroke-width="1" />
<text x="13.6" y="482.8" font-size="16.3" fill="#222" text-anchor="middle" font-family="Liberation Sans" >9</text>
<line x1="0" y1="512.5" x2="29" y2="512.5" stroke="#c4c4c4" stroke-width="1" />
<text x="13.6" y="506.8" font-size="16.3" fill="#222" text-anchor="middle" font-family="Liberation Sans" >10</text>
<line x1="0" y1="536.5" x2="29" y2="536.5" stroke="#c4c4c4" stroke-width="1" />
<text x="13.6" y="530.8" font-size="16.3" fill="#222" text-anchor="middle" font-family="Liberation Sans" >11</text>
<line x1="0" y1="560.5" x2="29" y2="560.5" stroke="#c4c4c4" stroke-width="1" />
<text x="13.6" y="554.8" font-size="16.3" fill="#222" text-anchor="middle" font-family="Liberation Sans" >12</text>
<line x1="0" y1="584.5" x2="29" y2="584.5" stroke="#c4c4c4" stroke-width="1" />
<text x="13.6" y="578.8" font-size="16.3" fill="#222" text-anchor="middle" font-family="Liberation Sans" >13</text>
<line x1="0" y1="608.5" x2="29" y2="608.5" stroke="#c4c4c4" stroke-width="1" />
<text x="13.6" y="602.8" font-size="16.3" fill="#222" text-anchor="middle" font-family="Liberation Sans" >14</text>
<line x1="0" y1="632.5" x2="29" y2="632.5" stroke="#c4c4c4" stroke-width="1" />
<text x="13.6" y="626.8" font-size="16.3" fill="#222" text-anchor="middle" font-family="Liberation Sans" >15</text>
<line x1="0" y1="656.5" x2="29" y2="656.5" stroke="#c4c4c4" stroke-width="1" />
<text x="13.6" y="650.8" font-size="16.3" fill="#222" text-anchor="middle" font-family="Liberation Sans" >16</text>
<line x1="0" y1="680.5" x2="29" y2="680.5" stroke="#c4c4c4" stroke-width="1" />
<text x="13.6" y="674.8" font-size="16.3" fill="#222" text-anchor="middle" font-family="Liberation Sans" >17</text>
<line x1="0" y1="704.5" x2="29" y2="704.5" stroke="#c4c4c4" stroke-width="1" />
<text x="13.6" y="698.8" font-size="16.3" fill="#222" text-anchor="middle" font-family="Liberation Sans" >18</text>
<line x1="0" y1="728.5" x2="29" y2="728.5" stroke="#c4c4c4" stroke-width="1" />
<text x="13.6" y="722.8" font-size="16.3" fill="#222" text-anchor="middle" font-family="Liberation Sans" >19</text>
<line x1="0" y1="752.5" x2="29" y2="752.5" stroke="#c4c4c4" stroke-width="1" />
<text x="13.6" y="746.8" font-size="16.3" fill="#222" text-anchor="middle" font-family="Liberation Sans" >20</text>
<line x1="0" y1="776.5" x2="29" y2="776.5" stroke="#c4c4c4" stroke-width="1" />
<text x="13.6" y="770.8" font-size="16.3" fill="#222" text-anchor="middle" font-family="Liberation Sans" >21</text>
<line x1="0" y1="800.5" x2="29" y2="800.5" stroke="#c4c4c4" stroke-width="1" />
<text x="13.6" y="794.8" font-size="16.3" fill="#222" text-anchor="middle" font-family="Liberation Sans" >22</text>
<line x1="0" y1="824.5" x2="29" y2="824.5" stroke="#c4c4c4" stroke-width="1" />
<text x="13.6" y="818.8" font-size="16.3" fill="#222" text-anchor="middle" font-family="Liberation Sans" >23</text>
<line x1="0" y1="848.5" x2="29" y2="848.5" stroke="#c4c4c4" stroke-width="1" />
<text x="13.6" y="842.8" font-size="16.3" fill="#222" text-anchor="middle" font-family="Liberation Sans" >24</text>
<line x1="0" y1="872.5" x2="29" y2="872.5" stroke="#c4c4c4" stroke-width="1" />
<text x="13.6" y="866.8" font-size="16.3" fill="#222" text-anchor="middle" font-family="Liberation Sans" >25</text>
<line x1="0" y1="896.5" x2="29" y2="896.5" stroke="#c4c4c4" stroke-width="1" />
<text x="13.6" y="890.8" font-size="16.3" fill="#222" text-anchor="middle" font-family="Liberation Sans" >26</text>
<line x1="0" y1="920.5" x2="29" y2="920.5" stroke="#c4c4c4" stroke-width="1" />
<text x="13.6" y="914.8" font-size="16.3" fill="#222" text-anchor="middle" font-family="Liberation Sans" >27</text>
<line x1="0" y1="944.5" x2="29" y2="944.5" stroke="#c4c4c4" stroke-width="1" />
<text x="13.6" y="938.8" font-size="16.3" fill="#222" text-anchor="middle" font-family="Liberation Sans" >28</text>
<rect x="30" y="273" width="1860" height="656" fill="#ffffff" />
<line x1="1890.5" y1="273" x2="1890.5" y2="929" stroke="#a6a6a6" stroke-width="1" />
<rect x="1891" y="249" width="21" height="680" fill="#e8e8e8" />
<rect x="1895" y="270" width="17" height="659" fill="#d9d9d9" />
<rect x="1894.5" y="251.5" width="18" height="18" fill="#fff" stroke="#b0b0b0" stroke-width="1" />
<path d="M1898.5,263 h9 l-4.5,-5 z" fill="#777" />
<rect x="1894.5" y="270.5" width="18" height="319" fill="#fff" stroke="#ababab" stroke-width="1" />
<rect x="1894.5" y="911.5" width="18" height="18" fill="#fff" stroke="#b0b0b0" stroke-width="1" />
<path d="M1898.5,917 h9 l-4.5,5 z" fill="#777" />
<rect x="53.5" y="289.5" width="884" height="360" fill="#fff" stroke="#d9d9d9" stroke-width="1" />
<rect x="66" y="299" width="141" height="22" fill="url(#btn)" />
<text x="70.3" y="315" font-size="13.5" fill="#000" textLength="128.4" lengthAdjust="spacingAndGlyphs" font-family="Liberation Sans" >Sum of Total Revenue</text>
<text x="426.4" y="356.1" font-size="20.5" fill="#595959" textLength="137" lengthAdjust="spacingAndGlyphs" font-family="Liberation Sans" >North America</text>
<line x1="179" y1="383.5" x2="766.5" y2="383.5" stroke="#d9d9d9" stroke-width="1" />
<line x1="179" y1="411.5" x2="766.5" y2="411.5" stroke="#d9d9d9" stroke-width="1" />
<line x1="179" y1="439.5" x2="766.5" y2="439.5" stroke="#d9d9d9" stroke-width="1" />
<line x1="179" y1="466.5" x2="766.5" y2="466.5" stroke="#d9d9d9" stroke-width="1" />
<line x1="179" y1="494.5" x2="766.5" y2="494.5" stroke="#d9d9d9" stroke-width="1" />
<line x1="179" y1="522.5" x2="766.5" y2="522.5" stroke="#d9d9d9" stroke-width="1" />
<line x1="179" y1="550.5" x2="766.5" y2="550.5" stroke="#d9d9d9" stroke-width="1" />
<line x1="179" y1="577.5" x2="766.5" y2="577.5" stroke="#d9d9d9" stroke-width="1" />
<text x="67.2" y="388.0" font-size="13.6" fill="#595959" textLength="94.8" lengthAdjust="spacingAndGlyphs" font-family="Liberation Sans" >$70,000,000.00</text>
<text x="67.2" y="415.8" font-size="13.6" fill="#595959" textLength="94.8" lengthAdjust="spacingAndGlyphs" font-family="Liberation Sans" >$60,000,000.00</text>
<text x="67.2" y="443.5" font-size="13.6" fill="#595959" textLength="94.8" lengthAdjust="spacingAndGlyphs" font-family="Liberation Sans" >$50,000,000.00</text>
<text x="67.2" y="471.2" font-size="13.6" fill="#595959" textLength="94.8" lengthAdjust="spacingAndGlyphs" font-family="Liberation Sans" >$40,000,000.00</text>
<text x="67.2" y="498.9" font-size="13.6" fill="#595959" textLength="94.8" lengthAdjust="spacingAndGlyphs" font-family="Liberation Sans" >$30,000,000.00</text>
<text x="67.2" y="526.6" font-size="13.6" fill="#595959" textLength="94.8" lengthAdjust="spacingAndGlyphs" font-family="Liberation Sans" >$20,000,000.00</text>
<text x="67.2" y="554.3000000000001" font-size="13.6" fill="#595959" textLength="94.8" lengthAdjust="spacingAndGlyphs" font-family="Liberation Sans" >$10,000,000.00</text>
<text x="143.2" y="581.5" font-size="13.6" fill="#595959" textLength="12" lengthAdjust="spacingAndGlyphs" font-family="Liberation Sans" >$-</text>
<text x="201.1" y="601" font-size="13.6" fill="#595959" textLength="30.1" lengthAdjust="spacingAndGlyphs" font-family="Liberation Sans" >2010</text>
<text x="274.5" y="601" font-size="13.6" fill="#595959" textLength="30.1" lengthAdjust="spacingAndGlyphs" font-family="Liberation Sans" >2011</text>
<text x="347.8" y="601" font-size="13.6" fill="#595959" textLength="30.1" lengthAdjust="spacingAndGlyphs" font-family="Liberation Sans" >2012</text>
<text x="421.3" y="601" font-size="13.6" fill="#595959" textLength="30.1" lengthAdjust="spacingAndGlyphs" font-family="Liberation Sans" >2013</text>
<text x="494.8" y="601" font-size="13.6" fill="#595959" textLength="30.1" lengthAdjust="spacingAndGlyphs" font-family="Liberation Sans" >2014</text>
<text x="568" y="601" font-size="13.6" fill="#595959" textLength="30.1" lengthAdjust="spacingAndGlyphs" font-family="Liberation Sans" >2015</text>
<text x="641.3" y="601" font-size="13.6" fill="#595959" textLength="30.1" lengthAdjust="spacingAndGlyphs" font-family="Liberation Sans" >2016</text>
<text x="714.8" y="601" font-size="13.6" fill="#595959" textLength="30.1" lengthAdjust="spacingAndGlyphs" font-family="Liberation Sans" >2017</text>
<path d="M215.1,476.4 L290.4,440.5 L362.6,425.2 L435.8,489.4 L509.7,398 L583.3,474 L656.3,487 L730.9,499.9" fill="none" stroke="#4472c4" stroke-width="4.2" stroke-linejoin="round" stroke-linecap="round"/>
<rect x="786" y="466" width="139" height="22" fill="url(#btn)" />
<text x="790.3" y="481.8" font-size="13" fill="#000" textLength="38.3" lengthAdjust="spacingAndGlyphs" font-family="Liberation Sans" >Region</text>
<path d="M898.5,478.55 h6 l-3.0,3.5 z" fill="#333" />
<path d="M904,470 h15 l-5.5,6.5 v8 h-4 v-8 z" fill="#777" />
<line x1="791.4" y1="502.7" x2="826.6" y2="502.7" stroke="#4472c4" stroke-width="4.2" stroke-linecap="round"/>
<text x="828.6" y="507" font-size="13.3" fill="#595959" textLength="88.4" lengthAdjust="spacingAndGlyphs" font-family="Liberation Sans" >North America</text>
<rect x="884.2" y="616" width="18.5" height="21.700000000000045" fill="url(#btn)" />
<rect x="904" y="616" width="19" height="21.700000000000045" fill="url(#btn)" />
<path d="M888.5,627 h10 M893.5,622 v10" fill="none" stroke="#555" stroke-width="2" />
<path d="M908.5,627 h10" fill="none" stroke="#555" stroke-width="2" />
<rect x="66.2" y="616.2" width="58.599999999999994" height="21.5" fill="url(#btn)" />
<text x="69.8" y="632" font-size="13.5" fill="#000" textLength="32.5" lengthAdjust="spacingAndGlyphs" font-family="Liberation Sans" >Years</text>
<path d="M110.0,625.0 h9.2 l-4.6,5 z" fill="#333" />
<rect x="126.3" y="616.2" width="77.60000000000001" height="21.5" fill="url(#btn)" />
<text x="129.9" y="632" font-size="13.5" fill="#000" textLength="50.1" lengthAdjust="spacingAndGlyphs" font-family="Liberation Sans" >Quarters</text>
<path d="M188.9,625.0 h9.2 l-4.6,5 z" fill="#333" />
<rect x="205" y="616.2" width="92.80000000000001" height="21.5" fill="url(#btn)" />
<text x="208.6" y="632" font-size="13.5" fill="#000" textLength="63.8" lengthAdjust="spacingAndGlyphs" font-family="Liberation Sans" >Order Date</text>
<path d="M282.9,625.0 h9.2 l-4.6,5 z" fill="#333" />
<rect x="977.5" y="284.5" width="239" height="322.5" fill="#fff" stroke="#5b7cb3" stroke-width="1.2" />
<text x="988.6" y="307.2" font-size="16" fill="#000" textLength="50.7" lengthAdjust="spacingAndGlyphs" font-weight="bold" font-family="Liberation Sans" >Region</text>
<line x1="988" y1="317.5" x2="1206" y2="317.5" stroke="#5b7cb3" stroke-width="1.6" />
<line x1="1153" y1="295.4" x2="1163" y2="295.4" stroke="#555" stroke-width="1.5" />
<path d="M1143.5,293.9 l2.8,2.8 l5,-5" fill="none" stroke="#555" stroke-width="1.3" />
<line x1="1153" y1="301.2" x2="1163" y2="301.2" stroke="#555" stroke-width="1.5" />
<path d="M1143.5,299.7 l2.8,2.8 l5,-5" fill="none" stroke="#555" stroke-width="1.3" />
<line x1="1153" y1="307.7" x2="1163" y2="307.7" stroke="#555" stroke-width="1.5" />
<path d="M1143.5,306.2 l2.8,2.8 l5,-5" fill="none" stroke="#555" stroke-width="1.3" />
<path d="M1182,292 h19.5 l-7.5,9 M1182,292 l7.5,9 v9.5" fill="none" stroke="#555" stroke-width="1.4" />
<path d="M1194,302.5 l8,8 M1202,302.5 l-8,8" fill="none" stroke="#e04848" stroke-width="1.3" />
<rect x="988.6" y="323.4" width="217" height="30.3" fill="#fff" stroke="#d6d6d6" stroke-width="1" rx="3" />
<text x="999.4" y="343.8" font-size="15.5" fill="#000" textLength="28.8" lengthAdjust="spacingAndGlyphs" font-family="Liberation Sans" >Asia</text>
<rect x="988.6" y="358.4" width="217" height="30.3" fill="#fff" stroke="#d6d6d6" stroke-width="1" rx="3" />
<text x="999.4" y="378.8" font-size="15.5" fill="#000" textLength="158.2" lengthAdjust="spacingAndGlyphs" font-family="Liberation Sans" >Australia and Oceania</text>
<rect x="988.6" y="393.3" width="217" height="30.3" fill="#fff" stroke="#d6d6d6" stroke-width="1" rx="3" />
<text x="999.4" y="413.7" font-size="15.5" fill="#000" textLength="194.1" lengthAdjust="spacingAndGlyphs" font-family="Liberation Sans" >Central America and the ...</text>
<rect x="988.6" y="428.3" width="217" height="30.3" fill="#fff" stroke="#d6d6d6" stroke-width="1" rx="3" />
<text x="999.4" y="448.7" font-size="15.5" fill="#000" textLength="50.9" lengthAdjust="spacingAndGlyphs" font-family="Liberation Sans" >Europe</text>
<rect x="988.6" y="463.3" width="217" height="30.3" fill="#fff" stroke="#d6d6d6" stroke-width="1" rx="3" />
<text x="999.4" y="483.7" font-size="15.5" fill="#000" textLength="190.6" lengthAdjust="spacingAndGlyphs" font-family="Liberation Sans" >Middle East and North A...</text>
<rect x="988.6" y="498.2" width="217" height="30.3" fill="#b4c6e7" stroke="#9aaed0" stroke-width="1" rx="3" />
<text x="999.4" y="518.6" font-size="15.5" fill="#000" textLength="106.1" lengthAdjust="spacingAndGlyphs" font-family="Liberation Sans" >North America</text>
<rect x="988.6" y="533.2" width="217" height="30.3" fill="#fff" stroke="#d6d6d6" stroke-width="1" rx="3" />
<text x="999.4" y="553.6" font-size="15.5" fill="#000" textLength="137.1" lengthAdjust="spacingAndGlyphs" font-family="Liberation Sans" >Sub-Saharan Africa</text>
<rect x="51.5" y="687.5" width="889" height="300" fill="#fff" stroke="#d9d9d9" stroke-width="1" />
<rect x="63.9" y="697.1" width="141.1" height="21.699999999999932" fill="url(#btn)" />
<text x="68.4" y="712.5" font-size="13.5" fill="#000" textLength="128.3" lengthAdjust="spacingAndGlyphs" font-family="Liberation Sans" >Sum of Total Revenue</text>
<line x1="177" y1="738.5" x2="792" y2="738.5" stroke="#d9d9d9" stroke-width="1" />
<line x1="177" y1="787.5" x2="792" y2="787.5" stroke="#d9d9d9" stroke-width="1" />
<line x1="177" y1="835.5" x2="792" y2="835.5" stroke="#d9d9d9" stroke-width="1" />
<line x1="177" y1="884.5" x2="792" y2="884.5" stroke="#d9d9d9" stroke-width="1" />
<line x1="177" y1="932.5" x2="792" y2="932.5" stroke="#d9d9d9" stroke-width="1" />
<text x="65.1" y="741.6" font-size="13.6" fill="#595959" textLength="95" lengthAdjust="spacingAndGlyphs" font-family="Liberation Sans" >$30,000,000.00</text>
<text x="65.1" y="790.1" font-size="13.6" fill="#595959" textLength="95" lengthAdjust="spacingAndGlyphs" font-family="Liberation Sans" >$25,000,000.00</text>
<text x="65.1" y="838.5" font-size="13.6" fill="#595959" textLength="95" lengthAdjust="spacingAndGlyphs" font-family="Liberation Sans" >$20,000,000.00</text>
<text x="65.1" y="886.9000000000001" font-size="13.6" fill="#595959" textLength="95" lengthAdjust="spacingAndGlyphs" font-family="Liberation Sans" >$15,000,000.00</text>
<text x="65.1" y="935.3000000000001" font-size="13.6" fill="#595959" textLength="95" lengthAdjust="spacingAndGlyphs" font-family="Liberation Sans" >$10,000,000.00</text>
<rect x="305" y="852.2" width="3.8999999999999773" height="87.79999999999995" fill="#636363" />
<rect x="359" y="842" width="3.8999999999999773" height="98" fill="#6a9fd8" />
<rect x="447" y="897.8" width="3.8000000000000114" height="42.200000000000045" fill="#264478" />
<rect x="524.2" y="773.9" width="3.599999999999909" height="166.10000000000002" fill="#264478" />
<rect x="812" y="757" width="116" height="21.700000000000045" fill="url(#btn)" />
<text x="816.1" y="773.3" font-size="13.5" fill="#000" textLength="59" lengthAdjust="spacingAndGlyphs" font-family="Liberation Sans" >Item  Type</text>
<path d="M913.1,766.0 h9 l-4.5,5 z" fill="#333" />
<rect x="818" y="789.5" width="9" height="9" fill="#4472c4" />
<text x="830.6" y="798" font-size="13.6" fill="#595959" textLength="62.9" lengthAdjust="spacingAndGlyphs" font-family="Liberation Sans" >Baby Food</text>
<rect x="818" y="817.5" width="9" height="9" fill="#ed7d31" />
<text x="830.6" y="826" font-size="13.6" fill="#595959" textLength="61.9" lengthAdjust="spacingAndGlyphs" font-family="Liberation Sans" >Beverages</text>
<rect x="818" y="845.5" width="9" height="9" fill="#a5a5a5" />
<text x="830.6" y="854" font-size="13.6" fill="#595959" textLength="37.8" lengthAdjust="spacingAndGlyphs" font-family="Liberation Sans" >Cereal</text>
<rect x="818" y="874.1" width="9" height="9" fill="#ffc000" />
<text x="830.6" y="882.6" font-size="13.6" fill="#595959" textLength="44.9" lengthAdjust="spacingAndGlyphs" font-family="Liberation Sans" >Clothes</text>
<rect x="818" y="902.0" width="9" height="9" fill="#5b9bd5" />
<text x="830.6" y="910.5" font-size="13.6" fill="#595959" textLength="61" lengthAdjust="spacingAndGlyphs" font-family="Liberation Sans" >Cosmetics</text>
<rect x="0" y="929" width="1912" height="29" fill="#e6e6e6" />
<line x1="0" y1="929.5" x2="1890" y2="929.5" stroke="#a6a6a6" stroke-width="1" />
<path d="M29,939 v9 l-5,-4.5 z" fill="#c0c0c0" />
<path d="M53,939 v9 l5,-4.5 z" fill="#c0c0c0" />
<rect x="99.5" y="929.5" width="111" height="25" fill="#ffffff" stroke="#c6c6c6" stroke-width="1" />
<rect x="99" y="952" width="112" height="2.5" fill="#217346" />
<text x="112" y="946" font-size="17" fill="#217346" textLength="85" lengthAdjust="spacingAndGlyphs" font-family="Liberation Sans" stroke="#217346" stroke-width="0.6">Dashboard</text>
<text x="223.5" y="946" font-size="17" fill="#444" textLength="50.2" lengthAdjust="spacingAndGlyphs" font-family="Liberation Sans" >Sheet1</text>
<line x1="289.5" y1="933" x2="289.5" y2="953" stroke="#aaa" stroke-width="1" />
<text x="303.8" y="946" font-size="17" fill="#444" textLength="101.5" lengthAdjust="spacingAndGlyphs" font-family="Liberation Sans" >Sales Records</text>
<line x1="420.5" y1="933" x2="420.5" y2="953" stroke="#aaa" stroke-width="1" />
<circle cx="463.8" cy="943.7" r="9.5" fill="none" stroke="#777" stroke-width="1.2"/>
<path d="M458,943.7 h11.6 M463.8,938 v11.6" fill="none" stroke="#777" stroke-width="1.4" />
<rect x="1145" y="937.4" width="2.5" height="2.5" fill="#999" />
<rect x="1145" y="942.2" width="2.5" height="2.5" fill="#999" />
<rect x="1145" y="947.1" width="2.5" height="2.5" fill="#999" />
<rect x="1163.5" y="934.5" width="727" height="18" fill="#d9d9d9" stroke="#ababab" stroke-width="1" />
<rect x="1182.5" y="934.5" width="659" height="18" fill="#fff" stroke="#ababab" stroke-width="1" />
<rect x="1872.5" y="934.5" width="18" height="18" fill="#fff" stroke="#ababab" stroke-width="1" />
<rect x="1163.5" y="934.5" width="19" height="18" fill="#fff" stroke="#ababab" stroke-width="1" />
<path d="M1175,938.5 v10 l-5,-5 z" fill="#777" />
<path d="M1879,938.5 v10 l5,-5 z" fill="#777" />
<rect x="0" y="958" width="1912" height="24" fill="#f3f2f1" />
<line x1="0" y1="957.5" x2="1912" y2="957.5" stroke="#c8c8c8" stroke-width="1" />
<rect x="1544" y="958" width="50" height="24" fill="#c8c8c8" />
<rect x="1560.3" y="963.4" width="16.2" height="15.7" fill="#3a3a3a" />
<rect x="1562.1" y="965.2" width="3.3" height="3.3" fill="#c8c8c8" />
<rect x="1562.1" y="970.1" width="3.3" height="3.3" fill="#c8c8c8" />
<rect x="1562.1" y="975.0" width="3.3" height="3.3" fill="#c8c8c8" />
<rect x="1567.0" y="965.2" width="3.3" height="3.3" fill="#c8c8c8" />
<rect x="1567.0" y="970.1" width="3.3" height="3.3" fill="#c8c8c8" />
<rect x="1567.0" y="975.0" width="3.3" height="3.3" fill="#c8c8c8" />
<rect x="1571.8999999999999" y="965.2" width="3.3" height="3.3" fill="#c8c8c8" />
<rect x="1571.8999999999999" y="970.1" width="3.3" height="3.3" fill="#c8c8c8" />
<rect x="1571.8999999999999" y="975.0" width="3.3" height="3.3" fill="#c8c8c8" />
<rect x="1610.5" y="964.5" width="17" height="14.5" fill="none" stroke="#555" stroke-width="1.3" />
<rect x="1613.5" y="967.5" width="11" height="8.5" fill="none" stroke="#555" stroke-width="1" />
<path d="M1615.5,969.8 h7 M1615.5,971.8 h7 M1615.5,973.8 h7" fill="none" stroke="#555" stroke-width="0.9" />
<path d="M1660.5,964.5 h17 v14.5 h-17 z M1664.5,964.5 v7.5 h9 v-7.5 M1668.5,964.5 v7.5" fill="none" stroke="#555" stroke-width="1.3" />
<line x1="1700.4" y1="971.5" x2="1710.7" y2="971.5" stroke="#555" stroke-width="1.3" />
<line x1="1717.6" y1="972" x2="1841.5" y2="972" stroke="#b0b0b0" stroke-width="1" />
<rect x="1777.3" y="965" width="5.4" height="13.5" fill="#777" />
<path d="M1848,971.5 h9.7 M1852.9,966.7 v9.7" fill="none" stroke="#555" stroke-width="1.3" />
<text x="1874.9" y="977" font-size="13" fill="#555" textLength="30.2" lengthAdjust="spacingAndGlyphs" font-family="Liberation Sans" >100%</text>
</svg>
</body></html>
